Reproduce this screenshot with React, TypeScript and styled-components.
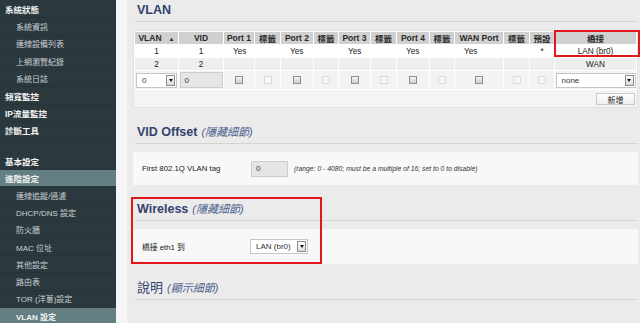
import styled, { createGlobalStyle } from 'styled-components'

const GlobalStyle = createGlobalStyle`
    html, body {
        margin: 0;
        padding: 0;
    }
    body {
        width: 640px;
        height: 323px;
        overflow: hidden;
        background: #ebebeb;
        font-family: "Liberation Sans", "Noto Sans CJK TC", sans-serif;
    }
`

const Page = styled.div`
    display: flex;
    width: 640px;
    height: 323px;
    overflow: hidden;
`

/* 左側選單 */
const Sidebar = styled.nav`
    width: 116px;
    flex-shrink: 0;
    background: #2b383d;
    padding-top: 1px;
    box-sizing: border-box;
`

const MenuItem = styled.div<{ $sub?: boolean; $active?: boolean }>`
    height: 17.3px;
    box-sizing: border-box;
    display: flex;
    align-items: center;
    padding-left: ${p => (p.$sub ? 16 : 5)}px;
    font-size: ${p => (p.$sub ? 8 : 8.5)}px;
    font-weight: ${p => (!p.$sub || p.$active ? 'bold' : 'normal')};
    color: ${p => (p.$sub && !p.$active ? '#cad2d4' : '#f2f2f2')};
    background: ${p => (p.$active ? '#647f84' : 'transparent')};
    border-bottom: 1px solid #263337;
    white-space: nowrap;
`

const MenuGap = styled.div`
    height: 13px;
`

/* 主要內容 */
const Main = styled.main`
    flex: 1;
    border-left: 11px solid #f5f5f5;
    padding: 0 2px 0 6px;
`

const Section = styled.section`
    position: relative;
    margin-bottom: 14px;
`

const SectionTitle = styled.div<{ $light?: boolean }>`
    height: 22px;
    box-sizing: border-box;
    margin-left: 2px;
    padding: 3px 0 0 2px;
    line-height: 14px;
    border-bottom: 1px solid #d4d4d4;
    font-size: ${p => (p.$light ? 13 : 12.5)}px;
    font-weight: ${p => (p.$light ? 'normal' : 'bold')};
    color: #34426e;
    white-space: nowrap;
`

const TitleNote = styled.span`
    margin-left: 4px;
    font-size: 11px;
    font-weight: normal;
    font-style: italic;
    color: #4d5f8d;
`

const TablePanel = styled.div`
    position: relative;
    margin-top: 8px;
    height: 78px;
    box-sizing: border-box;
    background: #f4f4f4;
    border: 1px solid #e2e2e2;
`

const Table = styled.table`
    width: 503px;
    table-layout: fixed;
    border-collapse: separate;
    border-spacing: 1px;
    background: #fff;
`

const Th = styled.th`
    height: 10px;
    padding: 0;
    background: #d0d0d0;
    font-size: 8.5px;
    font-weight: bold;
    color: #2a2a2a;
    text-align: center;
    white-space: nowrap;
`

const SortMark = styled.span`
    margin-left: 7px;
    font-size: 6px;
`

const Td = styled.td<{ $bg: string; $h: number; $left?: boolean }>`
    height: ${p => p.$h}px;
    padding: 0 0 0 ${p => (p.$left ? 9 : 0)}px;
    background: ${p => p.$bg};
    font-size: 8.2px;
    color: #222;
    text-align: ${p => (p.$left ? 'left' : 'center')};
    white-space: nowrap;
`

const SelectBox = styled.div<{ $w: number }>`
    display: inline-flex;
    align-items: center;
    justify-content: space-between;
    width: ${p => p.$w}px;
    height: 15px;
    box-sizing: border-box;
    padding: 0 1px 0 5px;
    background: #fff;
    border: 1px solid #c6c6c6;
    font-size: 8px;
    color: #333;
    vertical-align: middle;
`

const SelectArrow = styled.span`
    display: flex;
    align-items: center;
    justify-content: center;
    width: 9px;
    height: 11px;
    box-sizing: border-box;
    border: 1px solid #8c8c8c;
    background: linear-gradient(#fdfdfd, #dcdcdc);

    &::after {
        content: '';
        border-left: 2px solid transparent;
        border-right: 2px solid transparent;
        border-top: 3px solid #111;
    }
`

const TextBox = styled.div<{ $w: number }>`
    display: inline-flex;
    align-items: center;
    width: ${p => p.$w}px;
    height: 16px;
    box-sizing: border-box;
    padding-left: 4px;
    background: #e5e5e5;
    border: 1px solid #cdcdcd;
    font-size: 8px;
    color: #333;
    vertical-align: middle;
`

const Check = styled.span<{ $disabled?: boolean }>`
    display: inline-block;
    width: 8px;
    height: 8px;
    box-sizing: border-box;
    border: 1px solid ${p => (p.$disabled ? '#dadada' : '#8f8f8f')};
    background: ${p => (p.$disabled ? '#f7f7f7' : 'linear-gradient(#f4f4f4, #cfcfcf)')};
    vertical-align: middle;
`

const TableFooter = styled.div`
    display: flex;
    justify-content: flex-end;
    padding: 3px 2px 0 0;
`

const Button = styled.button`
    width: 39px;
    height: 12px;
    padding: 0;
    border: 1px solid #c9c9c9;
    background: linear-gradient(#ffffff, #eeeeee);
    font-family: "Liberation Sans", "Noto Sans CJK TC", sans-serif;
    font-size: 8px;
    color: #222;
`

const FormPanel = styled.div<{ $h: number }>`
    display: flex;
    align-items: center;
    margin-top: 8px;
    height: ${p => p.$h}px;
    padding: 0 9px;
    box-sizing: border-box;
    background: #f8f8f8;
`

const FieldLabel = styled.div<{ $w: number }>`
    width: ${p => p.$w}px;
    flex-shrink: 0;
    font-size: 7.8px;
    color: #222;
    white-space: nowrap;
`

const Hint = styled.span`
    margin-left: 6px;
    font-size: 6.8px;
    font-style: italic;
    color: #333;
    white-space: nowrap;
`

/* 紅框標示 */
const Highlight = styled.div<{ $top: number; $left: number; $w: number; $h: number }>`
    position: absolute;
    top: ${p => p.$top}px;
    left: ${p => p.$left}px;
    width: ${p => p.$w}px;
    height: ${p => p.$h}px;
    box-sizing: border-box;
    border: 2px solid #e3161b;
    pointer-events: none;
`

const menu = [
    { label: '系統狀態' },
    { label: '系統資訊', sub: true },
    { label: '連線設備列表', sub: true },
    { label: '上網瀏覽紀錄', sub: true },
    { label: '系統日誌', sub: true },
    { label: '頻寬監控' },
    { label: 'IP流量監控' },
    { label: '診斷工具' },
    { label: '基本設定', gap: true },
    { label: '進階設定', active: true },
    { label: '連線追蹤/過濾', sub: true },
    { label: 'DHCP/DNS 設定', sub: true },
    { label: '防火牆', sub: true },
    { label: 'MAC 位址', sub: true },
    { label: '其他設定', sub: true },
    { label: '路由表', sub: true },
    { label: 'TOR (洋蔥)設定', sub: true },
    { label: 'VLAN 設定', sub: true, active: true },
]

const colWidths = [43, 44, 30, 25, 32, 24, 31, 25, 32, 24, 48, 25, 24, 81]
const headers = ['VLAN', 'VID', 'Port 1', '標籤', 'Port 2', '標籤', 'Port 3', '標籤', 'Port 4', '標籤', 'WAN Port', '標籤', '預設', '橋接']
const rows = [
    ['1', '1', 'Yes', '', 'Yes', '', 'Yes', '', 'Yes', '', 'Yes', '', '*', 'LAN (br0)'],
    ['2', '2', '', '', '', '', '', '', '', '', '', '', '', 'WAN'],
]
// port 欄位 (Yes 靠左)
const portCols = [2, 4, 6, 8, 10]

export default function App() {
    return (
        <Page>
            <GlobalStyle />
            <Sidebar>
                {menu.map(m => (
                    <div key={m.label}>
                        {m.gap && <MenuGap />}
                        <MenuItem $sub={m.sub} $active={m.active}>{m.label}</MenuItem>
                    </div>
                ))}
            </Sidebar>
            <Main>
                <Section>
                    <SectionTitle>VLAN</SectionTitle>
                    <TablePanel>
                        <Table>
                            <colgroup>
                                {colWidths.map((w, i) => <col key={i} style={{ width: w }} />)}
                            </colgroup>
                            <thead>
                                <tr>
                                    {headers.map((h, i) => (
                                        <Th key={i}>
                                            {h}
                                            {i === 0 && <SortMark>▲</SortMark>}
                                        </Th>
                                    ))}
                                </tr>
                            </thead>
                            <tbody>
                                {rows.map((r, ri) => (
                                    <tr key={ri}>
                                        {r.map((c, ci) => (
                                            <Td key={ci} $bg={ri === 0 ? '#ffffff' : '#eeeeee'} $h={12} $left={portCols.includes(ci)}>
                                                {c}
                                            </Td>
                                        ))}
                                    </tr>
                                ))}
                                <tr>
                                    <Td $bg="#f3f3f3" $h={18}>
                                        <SelectBox $w={41}>0<SelectArrow /></SelectBox>
                                    </Td>
                                    <Td $bg="#f3f3f3" $h={18}>
                                        <TextBox $w={43}>0</TextBox>
                                    </Td>
                                    {Array.from({ length: 11 }).map((_, i) => (
                                        <Td key={i} $bg="#f3f3f3" $h={18}>
                                            <Check $disabled={i % 2 === 1 || i === 10} />
                                        </Td>
                                    ))}
                                    <Td $bg="#f3f3f3" $h={18}>
                                        <SelectBox $w={80}>none<SelectArrow /></SelectBox>
                                    </Td>
                                </tr>
                            </tbody>
                        </Table>
                        <TableFooter>
                            <Button>新增</Button>
                        </TableFooter>
                        <Highlight $top={-1} $left={420} $w={86} $h={27} />
                    </TablePanel>
                </Section>

                <Section>
                    <SectionTitle>VID Offset<TitleNote>(隱藏細節)</TitleNote></SectionTitle>
                    <FormPanel $h={33}>
                        <FieldLabel $w={109}>First 802.1Q VLAN tag</FieldLabel>
                        <TextBox $w={37}>0</TextBox>
                        <Hint>(range: 0 - 4080; must be a multiple of 16; set to 0 to disable)</Hint>
                    </FormPanel>
                </Section>

                <Section>
                    <SectionTitle>Wireless<TitleNote>(隱藏細節)</TitleNote></SectionTitle>
                    <FormPanel $h={35}>
                        <FieldLabel $w={108}>橋接 eth1 到</FieldLabel>
                        <SelectBox $w={58}>LAN (br0)<SelectArrow /></SelectBox>
                    </FormPanel>
                    <Highlight $top={-2} $left={-2} $w={191} $h={67} />
                </Section>

                <Section>
                    <SectionTitle $light>說明<TitleNote>(顯示細節)</TitleNote></SectionTitle>
                </Section>
            </Main>
        </Page>
    )
}
